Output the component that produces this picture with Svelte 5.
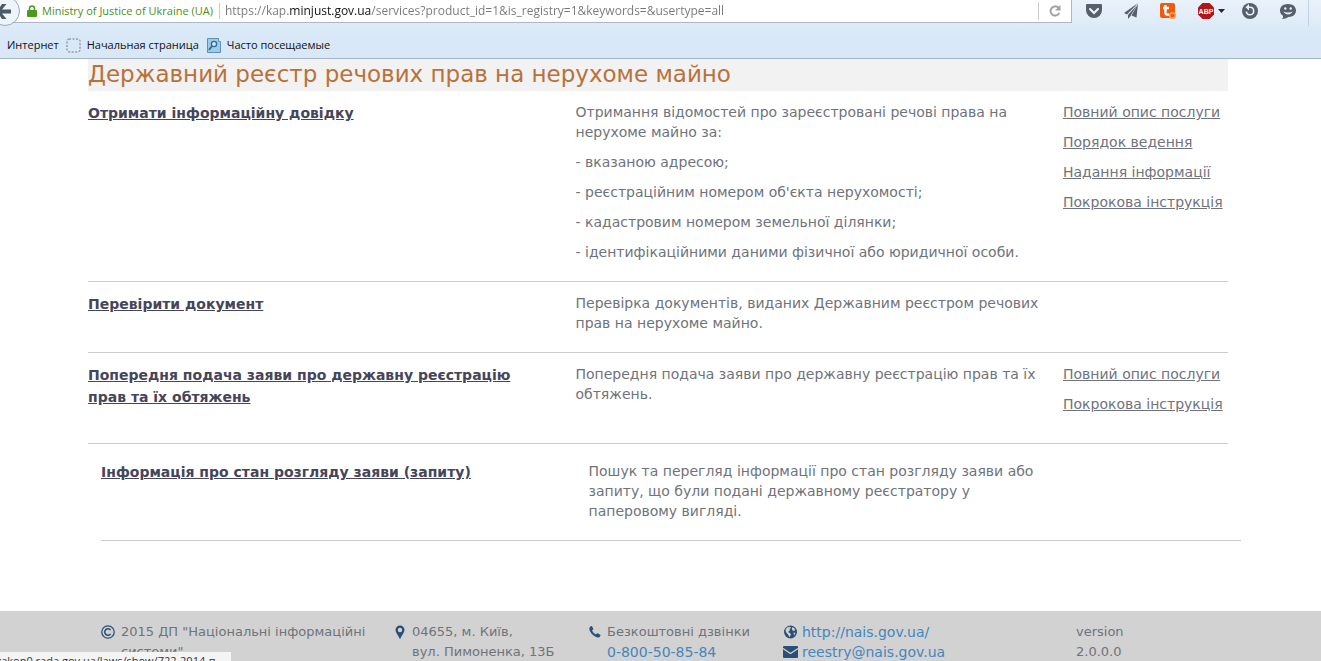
<script lang="ts">
    let address = "https://kap.minjust.gov.ua/services?product_id=1&is_registry=1&keywords=&usertype=all";

    const FULL = "Повний опис послуги";
    const STEPS = "Покрокова інструкція";

    let services: {title: string, text: string[], links: string[], kind?: string}[] = [
        {
            title: "Отримати інформаційну довідку",
            text: [
                "Отримання відомостей про зареєстровані речові права на нерухоме майно за:",
                "- вказаною адресою;",
                "- реєстраційним номером об'єкта нерухомості;",
                "- кадастровим номером земельної ділянки;",
                "- ідентифікаційними даними фізичної або юридичної особи.",
            ],
            links: [FULL, "Порядок ведення", "Надання інформації", STEPS],
        },
        {
            title: "Перевірити документ",
            text: ["Перевірка документів, виданих Державним реєстром речових прав на нерухоме майно."],
            links: [],
        },
        {
            title: "Попередня подача заяви про державну реєстрацію прав та їх обтяжень",
            text: ["Попередня подача заяви про державну реєстрацію прав та їх обтяжень."],
            links: [FULL, STEPS],
            kind: "tall",
        },
        {
            title: "Інформація про стан розгляду заяви (запиту)",
            text: ["Пошук та перегляд інформації про стан розгляду заяви або запиту, що були подані державному реєстратору у паперовому вигляді."],
            links: [],
            kind: "nested",
        },
    ];
</script>

<div class="window">
    <header class="browser">
        <div class="navbar">
            <div class="urlbar">
                <button class="back" aria-label="Back">
                    <svg width="20" height="27" viewBox="0 0 20 27">
                        <circle cx="5" cy="11" r="14.5" fill="#edf4fa" stroke="#96a9ba"/>
                        <path d="M0 9.500h11v4H0zM2 4h4.500L2 9.500H0V7zM0 13.500h2L6.500 19H2l-2-3z" fill="#4c5966"/>
                    </svg>
                </button>
                <span class="identity">
                    <svg width="10" height="12" viewBox="0 0 10 12">
                        <path d="M2.500 6V3.500a2.500 2.500 0 0 1 5 0V6" fill="none" stroke="#4b9a1d" stroke-width="1.600"/>
                        <rect y="5" width="10" height="7" rx="1" fill="#4b9a1d"/>
                    </svg>
                    Ministry of Justice of Ukraine (UA)
                </span>
                <input class="address" type="text" aria-label="Address" bind:value={address} spellcheck="false">
                <button class="reload" aria-label="Reload">
                    <svg width="14" height="14" viewBox="0 0 14 14" fill="none">
                        <path d="M10.500 3.800A4.600 4.600 0 1 0 11.300 9" stroke="#a0a3a6" stroke-width="2"/>
                        <path d="M12.500 1v5.500H7z" fill="#a0a3a6"/>
                    </svg>
                </button>
            </div>
            <div class="tools">
                <button aria-label="Pocket">
                    <svg width="18" height="16" viewBox="0 0 18 16">
                        <path d="M2 1h14q1 0 1 1v5a8 8 0 0 1-16 0V2q0-1 1-1z" fill="#56606d"/>
                        <path d="M5 6l4 4 4-4" fill="none" stroke="#f3f7fb" stroke-width="2" stroke-linecap="round"/>
                    </svg>
                </button>
                <button aria-label="Share">
                    <svg width="16" height="16" viewBox="0 0 16 16" fill="#56606d">
                        <path d="M15 0L1 10l3 1.500zM14 2L5 12v4l2.500-3zM15 1L8.500 12.500l5 2z"/>
                    </svg>
                </button>
                <button aria-label="Torrent">
                    <svg width="18" height="18" viewBox="0 0 18 18">
                        <rect x="1" y="1" width="15" height="15" rx="2" fill="#f05a0c"/>
                        <path d="M6.500 3v8q0 2 3.500 1.500M4 6h6" fill="none" stroke="#fff" stroke-width="2.400"/>
                        <circle cx="13.500" cy="13.500" r="2.800" fill="#f05a0c" stroke="#ffa04a" stroke-width="1.600"/>
                    </svg>
                </button>
                <button class="abp" aria-label="Adblock Plus">
                    <svg width="28" height="18" viewBox="0 0 28 18">
                        <path d="M5.500 1h7L17 5.500v7L12.500 17h-7L1 12.500v-7z" fill="#b3141b"/>
                        <text x="9" y="12" text-anchor="middle" font-size="7" font-weight="bold" fill="#fff">ABP</text>
                        <path d="M21 7h7l-3.500 4z" fill="#222b35"/>
                    </svg>
                </button>
                <button aria-label="Restore">
                    <svg width="18" height="18" viewBox="0 0 18 18">
                        <circle cx="9" cy="9" r="8" fill="#56606d"/>
                        <path d="M7 5.300h2a3.700 3.700 0 1 1-3.700 4.200" fill="none" stroke="#e9f0f7" stroke-width="1.600"/>
                        <path d="M8 2v6.500L4.500 5.300z" fill="#e9f0f7"/>
                    </svg>
                </button>
                <button aria-label="Hello">
                    <svg width="18" height="16" viewBox="0 0 18 16">
                        <path d="M9 1c5 0 8 2.800 8 6.500S14 14 9.500 14Q7 16 3 16q1.500-1.500 1-3.200C2 11.600 1 9.800 1 7.500 1 3.800 4 1 9 1z" fill="#56606d"/>
                        <circle cx="6.300" cy="5.500" r="1.200" fill="#e9f0f7"/>
                        <circle cx="11.700" cy="5.500" r="1.200" fill="#e9f0f7"/>
                        <path d="M4 8.500q5 6 10 0-5 2-10 0z" fill="#e9f0f7"/>
                    </svg>
                </button>
                <button class="menu" aria-label="Menu">
                    <svg width="16" height="16" viewBox="0 0 16 16" fill="#56606d">
                        <path d="M0 2h16v2H0zM0 7h16v2H0zM0 12h16v2H0z"/>
                    </svg>
                </button>
            </div>
        </div>
        <nav class="bookmarks">
            <a href="#internet">Интернет</a>
            <a href="#start">
                <svg width="15" height="15" viewBox="0 0 15 15">
                    <rect x="1" y="1" width="13" height="13" rx="2" fill="none" stroke="#6d7883" stroke-dasharray="2 1.500"/>
                </svg>
                Начальная страница
            </a>
            <a href="#frequent">
                <svg width="15" height="15" viewBox="0 0 15 15">
                    <path d="M1.500.5h11v3h2v11h-13z" fill="#9fcbe8" stroke="#5b92b8"/>
                    <circle cx="8" cy="6" r="2.600" fill="#d6ebf8" stroke="#2f6b95" stroke-width="1.400"/>
                    <path d="M6 8l-3 4" stroke="#2f6b95" stroke-width="1.800"/>
                </svg>
                Часто посещаемые
            </a>
        </nav>
    </header>

    <main>
        <h1>Державний реєстр речових прав на нерухоме майно</h1>
        {#each services as service}
            <section class={service.kind}>
                <div class="row">
                    <h2><a href="#service">{service.title}</a></h2>
                    <div class="about">
                        {#each service.text as line}
                            <p>{line}</p>
                        {/each}
                    </div>
                    <div>
                        {#each service.links as link}
                            <p><a href="#docs">{link}</a></p>
                        {/each}
                    </div>
                </div>
            </section>
        {/each}
    </main>

    <footer>
        <div class="contacts">
            <div class="contact">
                <svg width="14" height="14" viewBox="0 0 14 14" fill="none" stroke="#2a5078">
                    <circle cx="7" cy="7" r="6.200" stroke-width="1.300"/>
                    <path d="M9.600 5.200a3.200 3.200 0 1 0 0 3.600" stroke-width="1.500"/>
                </svg>
                <span>2015 ДП "Національні інформаційні системи"</span>
            </div>
            <div class="contact">
                <svg width="12" height="14" viewBox="0 0 12 14" fill="#2a5078">
                    <path fill-rule="evenodd" d="M6 .5a4.500 4.500 0 0 1 4.500 4.500C10.500 7 7.500 11 6.600 13.200q-.6 1-1.200 0C4.500 11 1.500 7 1.500 5A4.500 4.500 0 0 1 6 .5zm0 2.300a2.200 2.200 0 1 0 0 4.400 2.200 2.200 0 0 0 0-4.400z"/>
                </svg>
                <span>04655, м. Київ,<br>вул. Пимоненка, 13Б</span>
            </div>
            <div class="contact">
                <svg width="12" height="14" viewBox="0 0 12 14" fill="#2a5078">
                    <path d="M.8 2.200Q2 .8 3 1.200l1.300 2.600q.2.600-1.300 1.600 1.300 2.800 4 4.100Q8 8 8.600 8.200l2.700 1.500q.4.200 0 1.300-.8 1.700-3 1.500Q5.500 12 2.600 8.800.2 5.600.3 4q0-1 .5-1.800z"/>
                </svg>
                <span>Безкоштовні дзвінки<br><a href="tel:0800508584">0-800-50-85-84</a></span>
            </div>
            <div class="contact-list">
                <a class="contact" href="http://nais.gov.ua/">
                    <svg width="15" height="14" viewBox="0 0 15 14">
                        <circle cx="7.500" cy="7" r="6.500" fill="#2a5078"/>
                        <path d="M4 2.500l3-.8 1 1-1.500 1.500.3 1.300L5 7l1.800 1 1.200 1.300-1.500 2.900L5 9.500 3 7.200 2.500 5zM9.500 2l2.500 2-.5 2-2-.5-.7-1.700zM10.500 7.500l2 .5-1.500 2.500z" fill="#d2d2d2"/>
                    </svg>
                    <span>http://nais.gov.ua/</span>
                </a>
                <a class="contact" href="mailto:reestry@nais.gov.ua">
                    <svg width="15" height="14" viewBox="0 0 15 14">
                        <rect y="1" width="15" height="12" rx="1" fill="#2a5078"/>
                        <path d="M0 3.500l7.500 5 7.500-5" fill="none" stroke="#d2d2d2" stroke-width="1.200"/>
                    </svg>
                    <span>reestry@nais.gov.ua</span>
                </a>
            </div>
            <div class="version">version<br>2.0.0.0</div>
        </div>
    </footer>

    <div class="status">zakon0.rada.gov.ua/laws/show/722-2014-п</div>
</div>

<style>
    :global(body) {
        margin: 0;
    }

    .window {
        position: relative;
        height: 100vh;
        overflow: hidden;
        display: flex;
        flex-direction: column;
        background: #fff;
        color: #6f737a;
        font: 14px/20px Verdana, "DejaVu Sans", sans-serif;
    }

    button {
        display: flex;
        padding: 0;
        border: 0;
        background: none;
    }

    svg {
        flex: none;
    }

    .browser {
        height: 58px;
        flex: none;
        border-bottom: 1px solid #a3b5c5;
        background: linear-gradient(#eaf2fa, #d9e8f7 60%);
        color: #111;
        font: 11px/16px "Segoe UI", "Open Sans", sans-serif;
    }

    .navbar {
        display: flex;
        height: 28px;
    }

    .urlbar {
        flex: 1;
        display: flex;
        align-items: center;
        height: 22px;
        border: solid #a9b8c6;
        border-width: 0 1px 1px 0;
        background: #fff;
    }

    .back {
        align-self: flex-start;
    }

    .identity {
        display: flex;
        align-items: center;
        gap: 5px;
        margin-left: 7px;
        padding-right: 6px;
        border-right: 1px solid #ccc;
        color: #4b8f22;
        white-space: nowrap;
    }

    /* the host part of the address is darker than the rest */
    .address {
        flex: 1;
        min-width: 0;
        padding: 0;
        margin: 0 5px;
        border: 0;
        outline: 0;
        color: #777;
        font: inherit;
        font-size: 12px;
        background: linear-gradient(to right, #777 64px, #111 64px, #111 146px, #777 146px);
        background-clip: text;
        -webkit-text-fill-color: transparent;
    }

    .reload {
        padding: 2px 9px;
        border-left: 1px solid #ccc;
    }

    .tools {
        display: flex;
        align-items: center;
        height: 22px;
        padding-left: 13px;
        gap: 20px;
    }

    .abp {
        margin-right: -4px;
    }

    .menu {
        width: 3px;
        height: 30px;
        align-items: center;
        overflow: hidden;
        padding-left: 12px;
        margin-left: -9px;
        border-left: 1px solid #c3d2e0;
    }

    .bookmarks {
        display: flex;
        align-items: center;
        gap: 7px;
        height: 34px;
        padding-left: 7px;
    }

    .bookmarks a {
        display: flex;
        align-items: center;
        gap: 6px;
        color: #111;
        text-decoration: none;
    }

    main {
        flex: 1 0 auto;
        margin: 0 93px 0 88px;
    }

    h1 {
        margin: 0;
        padding-bottom: 2px;
        background: #f2f2f2;
        color: #b9713b;
        font-size: 23px;
        font-weight: normal;
        line-height: 30px;
    }

    section {
        padding: 11px 0 9px;
        border-bottom: 1px solid #ccc;
    }

    .tall {
        padding-bottom: 19px;
    }

    .nested {
        margin: 0 -13px 0 13px;
        padding: 17px 0 9px;
    }

    .row {
        display: grid;
        grid-template-columns: 5fr 5fr 2fr;
        margin: 0 -15px;
    }

    .row > * {
        padding: 0 15px;
    }

    .row > .about {
        padding-right: 0;
    }

    h2 {
        margin: 0;
        font-size: 14px;
        line-height: 22px;
    }

    h2 a {
        color: #45455a;
    }

    p {
        margin: 0 0 10px;
    }

    p a {
        color: inherit;
    }

    footer {
        flex: none;
        height: 50px;
        background: #d2d2d2;
        font-size: 13px;
    }

    .contacts {
        display: grid;
        grid-template-columns: 293px 195px 194px 293px 1fr;
        margin: 0 88px;
        padding: 11px 0 0 13px;
    }

    .contact {
        display: flex;
        gap: 6px;
    }

    .contact-list .contact {
        gap: 4px;
    }

    .contact svg {
        margin-top: 3px;
    }

    .contact span {
        padding-right: 20px;
    }

    footer a {
        color: #4486bd;
        font-size: 14px;
        text-decoration: none;
    }

    .status {
        position: absolute;
        left: 0;
        bottom: 0;
        width: 231px;
        height: 9px;
        overflow: hidden;
        background: #f4f4f4;
        color: #333;
        font: 11px/18px "Segoe UI", "Open Sans", sans-serif;
        text-indent: -4px;
        white-space: nowrap;
    }
</style>
